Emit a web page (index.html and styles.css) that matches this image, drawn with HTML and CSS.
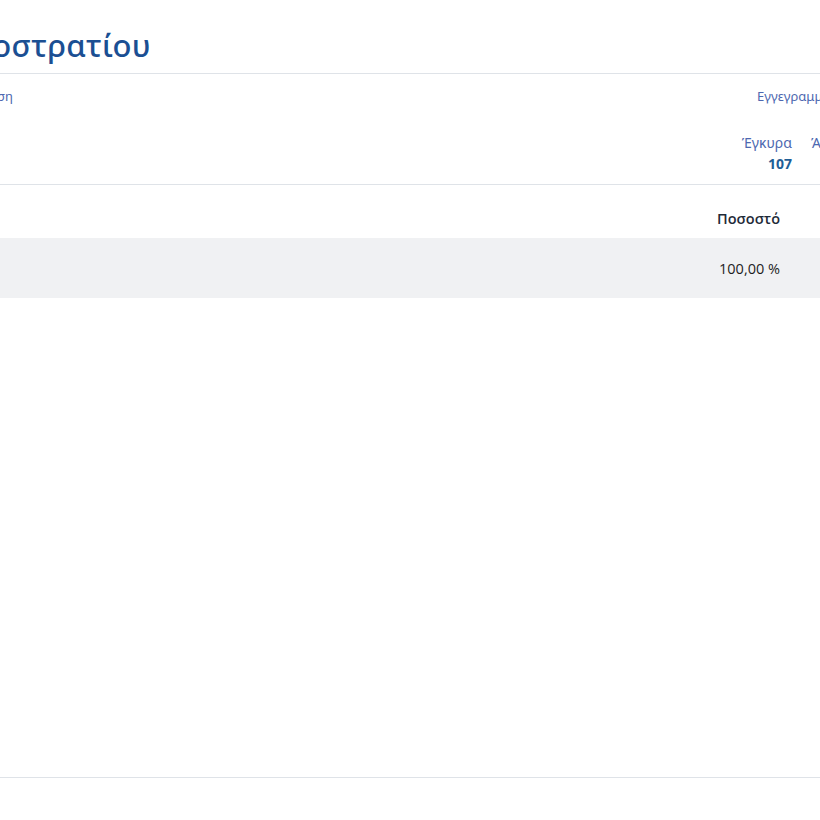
FILE: index.html
```
<!DOCTYPE html>
<html lang="el">
    <head>
        <meta charset="UTF-8" />
        <meta name="viewport" content="width=device-width, initial-scale=1.0" />
        <title>Αποτελέσματα Καλοστρατίου</title>
        <link rel="stylesheet" href="styles.css">
    </head>
    <body>
        <div class="page">
            <div class="header">
                <h1 class="title">Καλοστρατίου</h1>
            </div>

            <div class="info-row">
                <span class="info-left">Καταμέτρηση</span>
                <span class="info-right">Εγγεγραμμένοι</span>
            </div>

            <div class="stats">
                <div></div>
                <div class="stat">
                    <span class="stat-label">Έγκυρα</span>
                    <span class="stat-value">107</span>
                </div>
                <div class="stat">
                    <span class="stat-label">Άκυρα</span>
                    <span class="stat-value">0</span>
                </div>
            </div>

            <div class="results">
                <div class="row head">
                    <div class="cell name">Συνδυασμός</div>
                    <div class="cell pct">Ποσοστό</div>
                    <div class="cell"></div>
                </div>
                <div class="row alt">
                    <div class="cell name"><a class="party" href="#">ΛΑΪΚΗ ΣΥΣΠΕΙΡΩΣΗ</a></div>
                    <div class="cell pct">100,00 %</div>
                    <div class="cell"></div>
                </div>
            </div>

            <div class="footer-line"></div>
        </div>
    </body>
</html>
```

FILE: styles.css
```
* {
    margin: 0;
    padding: 0;
    box-sizing: border-box;
}

html,
body {
    overflow: hidden;
}

body {
    background: #fff;
    font-family: "Noto Sans", "Open Sans", sans-serif;
    color: #222;
}

.page {
    margin-left: -320px;
    width: 1460px;
}

.header {
    padding-top: 25px;
    padding-left: 256px;
    height: 74px;
    border-bottom: 1px solid #dfe3e8;
}

.title {
    font-size: 31px;
    font-weight: 500;
    line-height: 40px;
    color: #1b4f93;
    letter-spacing: 0.3px;
}

.info-row {
    display: grid;
    grid-template-columns: 1077px auto;
    padding-top: 13px;
    height: 40px;
    font-size: 13px;
    color: #4d68b0;
}

.info-left {
    justify-self: end;
    padding-right: 744px;
}

.stats {
    display: grid;
    grid-template-columns: 1050px 62px 62px;
    height: 71px;
    padding-top: 18px;
    border-bottom: 1px solid #dfe3e8;
}

.stat {
    display: flex;
    flex-direction: column;
    align-items: flex-end;
    line-height: 21px;
}

.stat-label {
    font-size: 14px;
    color: #4d68b0;
}

.stat-value {
    font-size: 14px;
    font-weight: 700;
    color: #1f5e96;
}

.row {
    display: grid;
    grid-template-columns: 1000px 100px 360px;
    align-items: center;
    font-family: "Open Sans", "Noto Sans", sans-serif;
    font-size: 14.5px;
}

.row.head {
    height: 53px;
    padding-top: 13px;
    font-weight: 600;
    color: #1e2a38;
}

.row.alt {
    height: 60px;
    background: #f0f1f3;
    color: #1e1e1e;
    font-weight: 500;
}

.cell.pct {
    text-align: right;
}

.head .name {
    visibility: hidden;
}

.party {
    font-size: 12px;
    color: #4d8fc9;
    text-decoration: none;
    display: block;
    width: 322px;
    margin-top: -26px;
    overflow: hidden;
    white-space: nowrap;
}

.footer-line {
    margin-top: 479px;
    border-top: 1px solid #dfe3e8;
}
```
